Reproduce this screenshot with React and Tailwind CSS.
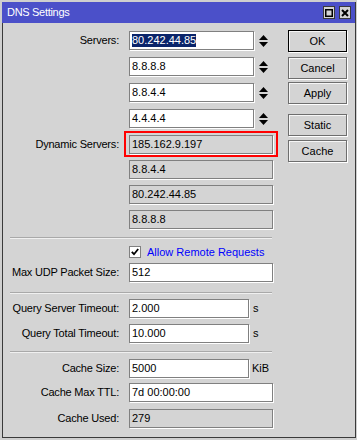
import React from "react";

const Spinner = () => (
  <svg width="9" height="12" viewBox="0 0 9 12" className="ml-[5px] shrink-0">
    <polygon points="4.5,0 9,5 0,5" fill="#000" />
    <polygon points="0,7 9,7 4.5,12" fill="#000" />
  </svg>
);

const Field = ({ w, ro, children }) => (
  <div
    className={`h-[19px] ${w} border border-[#808080] shadow-[1px_1px_0_#fff] pl-[2px] flex items-center leading-none whitespace-nowrap ${
      ro ? "bg-[#d4d4d4]" : "bg-white"
    }`}
  >
    {children}
  </div>
);

const Label = ({ children }) => (
  <div className="w-[116px] shrink-0 text-right tracking-[-0.2px] whitespace-nowrap">{children}</div>
);

const Row = ({ label, mt, children }) => (
  <div className={`flex items-center h-[19px] ${mt}`}>
    <Label>{label}</Label>
    <div className="ml-[10px] flex items-center">{children}</div>
  </div>
);

const Sep = ({ mt }) => (
  <div className={`ml-[7px] w-[262px] border-t border-b border-t-[#a9a9a9] border-b-[#f0f0f0] ${mt}`} />
);

const Btn = ({ children, mt, def }) => (
  <div
    className={`h-[22px] w-[59px] flex items-center justify-center border ${
      def ? "border-black" : "border-[#6e6e6e]"
    } shadow-[1px_1px_0_#fff,inset_1px_1px_0_#f6f6f6] ${mt}`}
  >
    {children}
  </div>
);

export default function App() {
  return (
    <div className="w-[357px] h-[440px] bg-[#cfcfcf] pt-[2px] pl-[2px] font-['Liberation_Sans',Arial,sans-serif] text-[11px] text-black">
      <div className="w-[354px] h-[436px] flex flex-col border-r border-b border-[#3a3a3a] bg-[#d4d4d4]">
        <div className="h-[21px] shrink-0 bg-[#4b50c9] flex items-start justify-between">
          <div className="text-white pl-[5px] pt-[5px] text-[11px] tracking-[-0.3px] leading-none">DNS Settings</div>
          <div className="flex gap-[4px] pt-[4px] pr-[4px]">
            <div className="w-[12px] h-[13px] bg-[#d4d4d4] border border-[#3a3a3a] flex items-center justify-center">
              <svg width="8" height="8" viewBox="0 0 8 8">
                <rect x="0.75" y="0.75" width="6.5" height="6.5" fill="none" stroke="#000" strokeWidth="1.5" />
              </svg>
            </div>
            <div className="w-[12px] h-[13px] bg-[#d4d4d4] border border-[#3a3a3a] flex items-center justify-center">
              <svg width="8" height="8" viewBox="0 0 8 8">
                <path d="M1 1 L7 7 M7 1 L1 7" stroke="#000" strokeWidth="2" />
              </svg>
            </div>
          </div>
        </div>
        <div className="flex-1 flex border-l border-[#3a3a3a]">
          <div className="w-[285px] shrink-0 pt-[8px] flex flex-col">
            <Row label="Servers:" mt="">
              <Field w="w-[125px]">
                <span className="bg-[#0a246a] text-white leading-[13px]">80.242.44.85</span>
              </Field>
              <Spinner />
            </Row>
            <Row label="" mt="mt-[7px]">
              <Field w="w-[125px]">8.8.8.8</Field>
              <Spinner />
            </Row>
            <Row label="" mt="mt-[7px]">
              <Field w="w-[125px]">8.8.4.4</Field>
              <Spinner />
            </Row>
            <Row label="" mt="mt-[7px]">
              <Field w="w-[125px]">4.4.4.4</Field>
              <Spinner />
            </Row>
            <Row label="Dynamic Servers:" mt="mt-[7px]">
              <div className="relative">
                <Field w="w-[144px]" ro>185.162.9.197</Field>
                <div className="absolute left-[-5px] right-[-5px] top-[-4px] bottom-[-3px] border-2 border-[#ff0000]" />
              </div>
            </Row>
            <Row label="" mt="mt-[6px]">
              <Field w="w-[144px]" ro>8.8.4.4</Field>
            </Row>
            <Row label="" mt="mt-[6px]">
              <Field w="w-[144px]" ro>80.242.44.85</Field>
            </Row>
            <Row label="" mt="mt-[6px]">
              <Field w="w-[144px]" ro>8.8.8.8</Field>
            </Row>
            <Sep mt="mt-[8px]" />
            <div className="flex items-center h-[12px] mt-[7px]">
              <div className="w-[116px] shrink-0" />
              <div className="ml-[10px] flex items-center">
                <div className="w-[12px] h-[12px] bg-white border border-[#808080] flex items-center justify-center">
                  <svg width="8" height="8" viewBox="0 0 8 8">
                    <path d="M0.8 3.8 L3 6.2 L7.2 1" fill="none" stroke="#000" strokeWidth="1.8" />
                  </svg>
                </div>
                <span className="ml-[6px] text-[#0000ff] whitespace-nowrap">Allow Remote Requests</span>
              </div>
            </div>
            <Row label="Max UDP Packet Size:" mt="mt-[5px]">
              <Field w="w-[144px]">512</Field>
            </Row>
            <Sep mt="mt-[10px]" />
            <Row label="Query Server Timeout:" mt="mt-[5px]">
              <Field w="w-[120px]">2.000</Field>
              <span className="ml-[4px]">s</span>
            </Row>
            <Row label="Query Total Timeout:" mt="mt-[6px]">
              <Field w="w-[120px]">10.000</Field>
              <span className="ml-[4px]">s</span>
            </Row>
            <Sep mt="mt-[8px]" />
            <Row label="Cache Size:" mt="mt-[6px]">
              <Field w="w-[120px]">5000</Field>
              <span className="ml-[3px]">KiB</span>
            </Row>
            <Row label="Cache Max TTL:" mt="mt-[5px]">
              <Field w="w-[144px]">7d 00:00:00</Field>
            </Row>
            <Row label="Cache Used:" mt="mt-[7px]">
              <Field w="w-[144px]" ro>279</Field>
            </Row>
          </div>
          <div className="w-[59px] shrink-0 pt-[7px] flex flex-col">
            <Btn def mt="">OK</Btn>
            <Btn mt="mt-[5px]">Cancel</Btn>
            <Btn mt="mt-[3px]">Apply</Btn>
            <Btn mt="mt-[10px]">Static</Btn>
            <Btn mt="mt-[4px]">Cache</Btn>
          </div>
        </div>
      </div>
    </div>
  );
}
